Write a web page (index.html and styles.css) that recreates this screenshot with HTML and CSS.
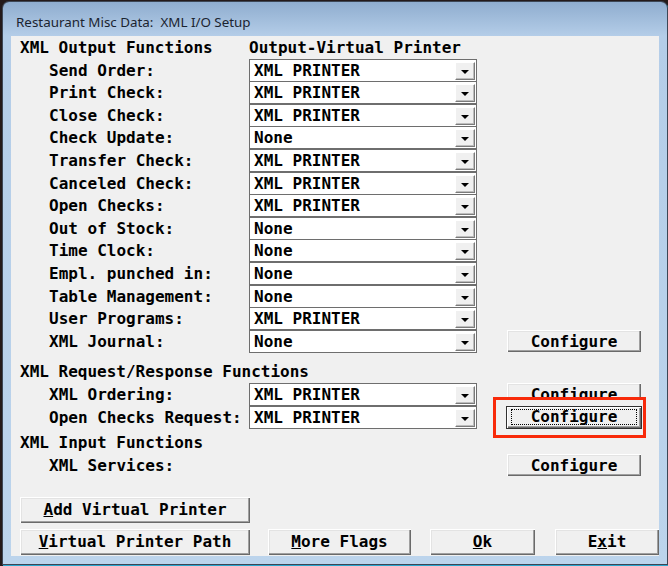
FILE: index.html
```html
<!DOCTYPE html>
<html lang="en">
<head>
  <meta charset="UTF-8">
  <link rel="stylesheet" href="styles.css">
  <title>XML I/O Setup</title>
</head>
<body>
  <div class="window">
    <div class="titlebar">Restaurant Misc Data:&nbsp; XML I/O Setup</div>
    <div class="client">

      <div class="section">
        <div class="row">
          <span class="label">XML Output Functions</span>
          <span>Output-Virtual Printer</span>
        </div>
        <div class="row">
          <span class="label sub">Send Order:</span>
          <div class="combo"><span>XML PRINTER</span><i class="drop"></i></div>
        </div>
        <div class="row">
          <span class="label sub">Print Check:</span>
          <div class="combo"><span>XML PRINTER</span><i class="drop"></i></div>
        </div>
        <div class="row">
          <span class="label sub">Close Check:</span>
          <div class="combo"><span>XML PRINTER</span><i class="drop"></i></div>
        </div>
        <div class="row">
          <span class="label sub">Check Update:</span>
          <div class="combo"><span>None</span><i class="drop"></i></div>
        </div>
        <div class="row">
          <span class="label sub">Transfer Check:</span>
          <div class="combo"><span>XML PRINTER</span><i class="drop"></i></div>
        </div>
        <div class="row">
          <span class="label sub">Canceled Check:</span>
          <div class="combo"><span>XML PRINTER</span><i class="drop"></i></div>
        </div>
        <div class="row">
          <span class="label sub">Open Checks:</span>
          <div class="combo"><span>XML PRINTER</span><i class="drop"></i></div>
        </div>
        <div class="row">
          <span class="label sub">Out of Stock:</span>
          <div class="combo"><span>None</span><i class="drop"></i></div>
        </div>
        <div class="row">
          <span class="label sub">Time Clock:</span>
          <div class="combo"><span>None</span><i class="drop"></i></div>
        </div>
        <div class="row">
          <span class="label sub">Empl. punched in:</span>
          <div class="combo"><span>None</span><i class="drop"></i></div>
        </div>
        <div class="row">
          <span class="label sub">Table Management:</span>
          <div class="combo"><span>None</span><i class="drop"></i></div>
        </div>
        <div class="row">
          <span class="label sub">User Programs:</span>
          <div class="combo"><span>XML PRINTER</span><i class="drop"></i></div>
        </div>
        <div class="row">
          <span class="label sub">XML Journal:</span>
          <div class="combo"><span>None</span><i class="drop"></i></div>
          <button class="btn cfg">Configure</button>
        </div>
      </div>

      <div class="section request">
        <div class="row">
          <span class="label">XML Request/Response Functions</span>
        </div>
        <div class="row">
          <span class="label sub">XML Ordering:</span>
          <div class="combo"><span>XML PRINTER</span><i class="drop"></i></div>
          <button class="btn cfg">Configure</button>
        </div>
        <div class="row">
          <span class="label sub">Open Checks Request:</span>
          <div class="combo"><span>XML PRINTER</span><i class="drop"></i></div>
          <button class="btn cfg default"><span class="focus">Configure</span></button>
        </div>
        <div class="marker"></div>
      </div>

      <div class="section input">
        <div class="row">
          <span class="label">XML Input Functions</span>
        </div>
        <div class="row">
          <span class="label sub">XML Services:</span>
          <button class="btn cfg">Configure</button>
        </div>
      </div>

      <div class="actions">
        <div class="action-row">
          <button class="btn wide"><u>A</u>dd Virtual Printer</button>
        </div>
        <div class="action-row">
          <button class="btn wide"><u>V</u>irtual Printer Path</button>
          <button class="btn flags"><u>M</u>ore Flags</button>
          <button class="btn ok"><u>O</u>k</button>
          <button class="btn exit">E<u>x</u>it</button>
        </div>
      </div>

    </div>
  </div>
</body>
</html>
```

FILE: styles.css
```css
html, body {
  margin: 0;
  width: 668px;
  height: 566px;
  overflow: hidden;
  background: #241a1a;
}

body {
  padding: 2px 0 0 3px;
  box-sizing: border-box;
}

.window {
  width: 664px;
  height: 562px;
  box-sizing: border-box;
  border-radius: 6px 6px 0 0;
  background: linear-gradient(#8fadcf 0, #b4cde8 34px, #bcd4ec 100%);
  box-shadow: 0 0 0 1px #3c4655, 1px 2px 0 1px #2aa6cf;
  padding: 0 8px;
  display: flex;
  flex-direction: column;
}

.titlebar {
  height: 34px;
  line-height: 40px;
  padding-left: 5px;
  font-family: "Noto Sans", "DejaVu Sans", sans-serif;
  font-size: 13.4px;
  color: #1b2430;
  white-space: pre;
}

.client {
  position: relative;
  height: 520px;
  background: #f0f0f0;
  padding-left: 9px;
  font-family: "DejaVu Sans Mono", monospace;
  font-weight: bold;
  font-size: 16px;
  color: #000;
}

.section {
  position: relative;
}

.section.request {
  margin-top: 8px;
}

.section.input {
  margin-top: 3.4px;
}

/* label | list | spacer | button */
.row {
  display: grid;
  grid-template-columns: 229px 228px 30px 134px;
  height: 22.6px;
  align-items: center;
  white-space: pre;
}

.label.sub {
  padding-left: 29px;
}

/* drop-down list */
.combo {
  height: 23px;
  box-sizing: border-box;
  border: 1px solid #6e6e6e;
  background: #fff;
  display: flex;
  align-items: center;
  padding-left: 4px;
  position: relative;
}

.combo span {
  flex: 1;
}

.drop {
  position: absolute;
  right: 1px;
  top: 2px;
  bottom: 1px;
  width: 20px;
  box-sizing: border-box;
  background: #f0f0f0;
  border-top: 1px solid #fff;
  border-left: 1px solid #fff;
  border-right: 1px solid #7a7a7a;
  border-bottom: 1px solid #7a7a7a;
  box-shadow: inset -1px -1px 0 #bdbdbd;
}

.drop::after {
  content: "";
  position: absolute;
  left: 5px;
  top: 7px;
  border-left: 4px solid transparent;
  border-right: 4px solid transparent;
  border-top: 4px solid #000;
}

/* raised push buttons */
.btn {
  font: inherit;
  color: #000;
  background: #f0f0f0;
  border: 0;
  padding: 0;
  box-shadow:
    inset 1px 1px 0 #fff,
    inset -1px -1px 0 #6a6a6a,
    inset -2px -2px 0 #a0a0a0,
    inset 2px 2px 0 #e3e3e3;
  white-space: pre;
}

.cfg {
  grid-column: 4;
  width: 134px;
  height: 22px;
}

.cfg.default {
  position: relative;
  z-index: 2;
  height: 21px;
  box-shadow:
    0 0 0 1px #303030,
    inset 1px 1px 0 #fff,
    inset -1px -1px 0 #6a6a6a,
    inset -2px -2px 0 #a0a0a0;
}

.focus {
  display: block;
  margin: 0 4px;
  height: 14px;
  line-height: 14px;
  border: 1px dotted #000;
}

/* red call-out around the selected button */
.marker {
  position: absolute;
  left: 473px;
  top: 37px;
  width: 153px;
  height: 41px;
  box-sizing: border-box;
  border: 3px solid #f82a0a;
  background: #f0f0f0;
  z-index: 1;
}

.actions {
  margin-top: 20px;
  display: flex;
  flex-direction: column;
  gap: 6px;
}

.action-row {
  display: flex;
}

.action-row .btn {
  height: 26px;
}

.wide {
  width: 230px;
}

.flags {
  width: 143px;
  margin-left: 18px;
}

.ok {
  width: 105px;
  margin-left: 19px;
}

.exit {
  width: 104px;
  margin-left: 20px;
}
```
